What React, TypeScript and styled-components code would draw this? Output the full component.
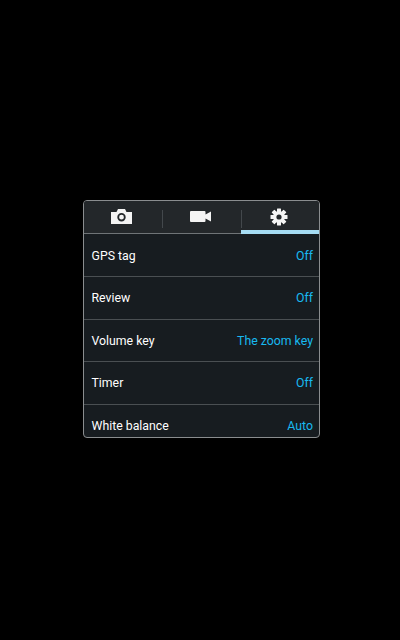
import React from 'react';
import styled, { createGlobalStyle } from 'styled-components';

const GlobalStyle = createGlobalStyle`
  html, body {
    margin: 0;
    padding: 0;
    background: #000;
  }
`;

const settings = [
  { name: 'GPS tag', value: 'Off' },
  { name: 'Review', value: 'Off' },
  { name: 'Volume key', value: 'The zoom key' },
  { name: 'Timer', value: 'Off' },
  { name: 'White balance', value: 'Auto' },
];

const CameraIcon = () => (
  <svg width="21" height="15" viewBox="0 0 21 15">
    <path
      fillRule="evenodd"
      fill="#f4f4f4"
      d="M0 3h5.500l1.500-3h7l1.500 3H21v12H0z M10.500 4a4.200 4.200 0 1 0 0 8.400a4.200 4.200 0 0 0 0-8.400z M10.500 5.800a2.400 2.400 0 1 1 0 4.800a2.400 2.400 0 0 1 0-4.800z"
    />
  </svg>
);

const VideoIcon = () => (
  <svg width="21" height="11" viewBox="0 0 21 11">
    <path fill="#f4f4f4" d="M0 1Q0 0 1 0h13.500Q15.500 0 15.500 1v2.500L21 .500v10L15.500 7.500V10Q15.500 11 14.500 11H1Q0 11 0 10z" />
  </svg>
);

const GearIcon = () => (
  <svg width="18" height="18" viewBox="0 0 18 18">
    <g fill="#f4f4f4">
      {[0, 45, 90, 135].map((a) => (
        <rect key={a} x="7" y="0.500" width="4" height="17" rx="0.500" transform={`rotate(${a} 9 9)`} />
      ))}
    </g>
    <circle cx="9" cy="9" r="5.900" fill="#f4f4f4" />
    <circle cx="9" cy="9" r="2.600" fill="#23272a" />
  </svg>
);

export default function App() {
  return (
    <>
      <GlobalStyle />
      <Page>
        <Panel>
          <TabBar>
            <Tab>
              <CameraIcon />
            </Tab>
            <Tab $divider>
              <VideoIcon />
            </Tab>
            <Tab $divider $active>
              <GearIcon />
            </Tab>
          </TabBar>
          <List>
            {settings.map((s) => (
              <Row key={s.name}>
                <Name>{s.name}</Name>
                <Value>{s.value}</Value>
              </Row>
            ))}
          </List>
        </Panel>
      </Page>
    </>
  );
}

const Page = styled.div`
  width: 400px;
  height: 640px;
  box-sizing: border-box;
  padding: 200px 0 0 83px;
  background: #000;
  overflow: hidden;
  font-family: 'Roboto', 'Liberation Sans', sans-serif;
`;

const Panel = styled.div`
  width: 237px;
  height: 238px;
  box-sizing: border-box;
  border: 1px solid #8a8d8f;
  border-radius: 4px;
  background: #171c20;
  overflow: hidden;
`;

const TabBar = styled.div`
  display: grid;
  grid-template-columns: 78px 79px 78px;
  height: 33px;
  background: #23272a;
`;

const Tab = styled.div<{ $divider?: boolean; $active?: boolean }>`
  position: relative;
  display: flex;
  align-items: center;
  justify-content: center;
  box-sizing: border-box;
  padding: 0 3px 2px 0;
  box-shadow: inset 0 ${(p) => (p.$active ? '-4px 0 #a5dcf3' : '-1px 0 #6f7477')};

  ${(p) =>
    p.$divider &&
    `
    &::before {
      content: '';
      position: absolute;
      left: 0;
      top: 9px;
      width: 1px;
      height: 18px;
      background: #43484c;
    }
  `}
`;

const List = styled.div`
  display: flex;
  flex-direction: column;
  padding-top: 0.4px;
`;

const Row = styled.div`
  flex: none;
  display: flex;
  align-items: center;
  justify-content: space-between;
  box-sizing: border-box;
  height: 42.600px;
  padding: 1px 6px 0 7.500px;
  border-bottom: 1px solid #4a4f52;

  &:last-child {
    border-bottom: none;
    padding-top: 0;
  }
`;

const Name = styled.span`
  color: #fff;
  font-size: 12.300px;
`;

const Value = styled.span`
  color: #18b9f0;
  font-size: 12.300px;
`;
